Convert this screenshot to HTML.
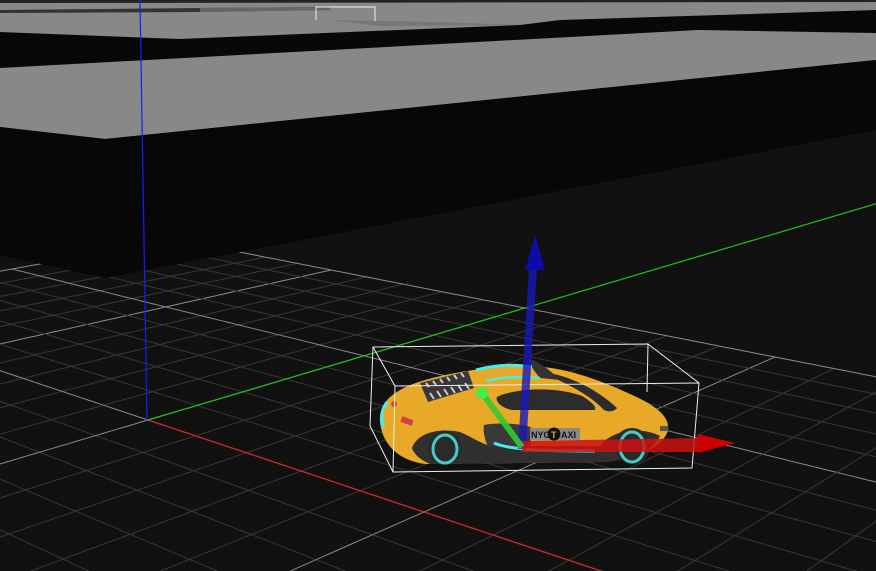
<!DOCTYPE html>
<html><head><meta charset="utf-8"><style>
html,body{margin:0;padding:0;background:#111;overflow:hidden;width:876px;height:571px}
svg{display:block}
</style></head><body>
<svg id="s" width="876" height="571" viewBox="0 0 876 571" xmlns="http://www.w3.org/2000/svg">
<rect width="876" height="571" fill="#111"/>
<g id="grid"></g>
<g id="axes"></g>
<polygon points="0,0 876,0 876,60 105,139 0,127" fill="#888"/>
<polygon points="0,0 876,0 876,2 0,3" fill="#222"/>
<polygon points="0,10 200,8 330,7 330,10 200,12 0,13" fill="#333"/>
<polygon points="200,8 330,7 330,10 200,12" fill="#666"/>
<polygon points="0,32 180,39 520,25 560,20 876,10 876,33 698,30 0,68" fill="#080808"/>
<polygon points="330,20 440,22 520,25 380,26" fill="#777"/>
<polygon points="0,127 105,139 876,60 876,130 105,278 0,255" fill="#070707"/>
<polyline points="316,20 316,7 375,7 375,21" fill="none" stroke="#eee" stroke-width="1"/>
<line x1="140" y1="0" x2="147" y2="420" stroke="#1a1aff" stroke-width="1.2"/>
<g>
<path d="M380,422 C378,400 398,388 425,380 C455,372 490,366 530,366 C565,367 600,380 630,394 C655,405 670,416 668,430 C664,446 640,458 605,462 L425,464 C396,460 382,442 380,422Z" fill="#e8a828"/>
<path d="M412,448 C418,432 440,428 460,432 C470,436 478,442 490,446 L600,446 C612,430 640,426 660,436 C652,452 632,460 605,462 L430,464 C420,460 414,454 412,448Z" fill="#303030"/>
<path d="M484,425 C500,422 525,424 532,428 L530,448 L488,447 C484,438 483,430 484,425Z" fill="#3a3a3a"/>
<path d="M497,397 C515,388 555,386 582,396 C592,402 598,408 594,410 L512,410 C502,408 495,402 497,397Z" fill="#2c2c2c"/>
<path d="M540,372 C570,374 600,392 617,408 C614,412 608,412 604,410 C590,395 565,382 540,372Z" fill="#2c2c2c"/>
<path d="M528,358 C540,362 552,372 560,380 L540,378 C535,372 530,366 528,358Z" fill="#333"/>
<path d="M420,383 L468,371 L474,388 L428,402 Z" fill="#383838"/>
<g stroke="#ccc" stroke-width="2">
<line x1="430" y1="393" x2="434" y2="399"/><line x1="437" y1="391" x2="441" y2="397"/><line x1="444" y1="389" x2="448" y2="395"/><line x1="451" y1="387" x2="455" y2="393"/><line x1="458" y1="385" x2="462" y2="391"/><line x1="465" y1="383" x2="469" y2="389"/>
<line x1="426" y1="383" x2="429" y2="387"/><line x1="433" y1="381" x2="436" y2="385"/><line x1="440" y1="379" x2="443" y2="383"/><line x1="447" y1="377" x2="450" y2="381"/><line x1="454" y1="375" x2="457" y2="379"/><line x1="461" y1="373" x2="464" y2="377"/>
</g>
<path d="M476,370 C495,365 515,364 532,367" stroke="#4ee" stroke-width="3" fill="none"/>
<path d="M486,381 C500,377 520,376 540,378" stroke="#4ee" stroke-width="2.5" fill="none"/>
<path d="M387,402 C380,412 381,420 384,428" stroke="#4ee" stroke-width="3" fill="none"/>
<path d="M494,443 C510,450 545,451 595,451" stroke="#4ee" stroke-width="3" fill="none"/>
<rect x="530" y="428" width="50" height="12" fill="#8a8a8a"/>
<text x="531" y="438" font-family="Liberation Sans, sans-serif" font-size="9" font-weight="bold" fill="#111">NYC</text>
<circle cx="554" cy="434" r="6.5" fill="#111"/><text x="551" y="438" font-family="Liberation Sans, sans-serif" font-size="9" font-weight="bold" fill="#e8a828">T</text>
<text x="561" y="438" font-family="Liberation Sans, sans-serif" font-size="9" font-weight="bold" fill="#111">AXI</text>
<circle cx="445" cy="448" r="17" fill="#2a2a2a"/>
<ellipse cx="445" cy="449" rx="12" ry="14" fill="none" stroke="#4cc" stroke-width="3"/>
<circle cx="632" cy="446" r="18" fill="#2a2a2a"/>
<ellipse cx="632" cy="447" rx="12" ry="15" fill="none" stroke="#4cc" stroke-width="3"/>
<rect x="401" y="418" width="12" height="6" fill="#c44" transform="rotate(20 407 421)"/>
<circle cx="394" cy="404" r="3" fill="#d44"/>
<rect x="660" y="426" width="8" height="5" fill="#555"/>
</g>
<g stroke="#eee" stroke-width="1" fill="none">
<polyline points="370,426 373,347 648,344 699,383 692,468 393,472 370,426"/>
<polyline points="373,347 395,386 699,383"/>
<line x1="395" y1="386" x2="393" y2="472"/>
<line x1="648" y1="344" x2="647" y2="392"/>
</g>
<g>
<polygon points="518,449 526,449 537,268 529,268" fill="#1818b8" opacity="0.8"/>
<polygon points="535,235 525,270 545,270" fill="#0c0ca8"/>
<polygon points="522,441 700,438 700,452 522,452" fill="#cc1010" opacity="0.85"/>
<polygon points="698,434 735,443 698,453" fill="#c00"/>
<line x1="482" y1="393" x2="522" y2="447" stroke="#3c3" stroke-width="6" opacity="0.9"/>
<circle cx="482" cy="393" r="6" fill="#4e4"/>
</g>
</svg>
<script>
(function(){
var src=[[0,0],[5,10],[-5,10],[5,0]], dst=[[148,420],[775,357],[331,270],[424,512]];
var A=[],b=[];
for(var i=0;i<4;i++){var u=src[i][0],v=src[i][1],x=dst[i][0],y=dst[i][1];
A.push([u,v,1,0,0,0,-u*x,-v*x]);b.push(x);
A.push([0,0,0,u,v,1,-u*y,-v*y]);b.push(y);}
var n=8;for(var c=0;c<n;c++){var p=c;for(var r=c+1;r<n;r++)if(Math.abs(A[r][c])>Math.abs(A[p][c]))p=r;
var t=A[c];A[c]=A[p];A[p]=t;t=b[c];b[c]=b[p];b[p]=t;
for(var r=0;r<n;r++){if(r==c)continue;var f=A[r][c]/A[c][c];for(var k=c;k<n;k++)A[r][k]-=f*A[c][k];b[r]-=f*b[c];}}
var h=[];for(var i=0;i<n;i++)h.push(b[i]/A[i][i]);
function P(u,v){var w=h[6]*u+h[7]*v+1;if(w<=0.02)return null;return[(h[0]*u+h[1]*v+h[2])/w,(h[3]*u+h[4]*v+h[5])/w];}
var NS="http://www.w3.org/2000/svg";
function line(g,pts,col,sw){var d="",pen=false;
for(var i=0;i<pts.length;i++){var q=pts[i];if(!q){pen=false;continue;}d+=(pen?"L":"M")+q[0].toFixed(1)+","+q[1].toFixed(1);pen=true;}
var e=document.createElementNS(NS,"path");e.setAttribute("d",d);e.setAttribute("stroke",col);e.setAttribute("stroke-width",sw);e.setAttribute("fill","none");g.appendChild(e);}
var g=document.getElementById("grid"),R=10;
for(var k=-R;k<=R;k++){
var maj=(k%5==0),col=maj?"#8a8a8a":"#383838";
var a=[],bb=[];for(var s=-R;s<=R;s+=0.1){a.push(P(k,s));bb.push(P(s,k));}
line(g,a,col,1);line(g,bb,col,1);}
var ax=document.getElementById("axes");
var r=[],gr=[];for(var s=0;s<=40;s+=0.1){r.push(P(s,0));gr.push(P(0,s));}
line(ax,r,"#e02020",1.2);line(ax,gr,"#20c020",1.2);
})();
</script>
</body></html>
